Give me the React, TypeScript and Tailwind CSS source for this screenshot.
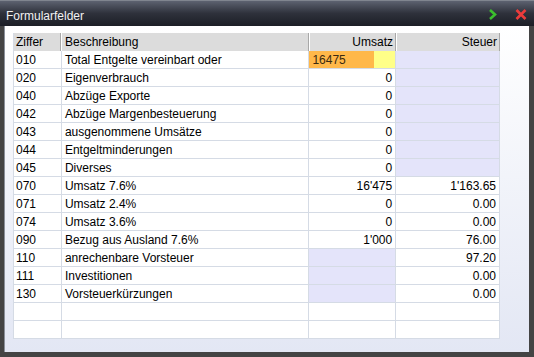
import React from 'react';

type Cell = { text?: string; kind?: 'white' | 'lavender' | 'input' };

interface Row {
  code: string;
  label: string;
  umsatz: Cell;
  steuer: Cell;
}

const rows: Row[] = [
  { code: '010', label: 'Total Entgelte vereinbart oder', umsatz: { kind: 'input', text: '16475' }, steuer: { kind: 'lavender' } },
  { code: '020', label: 'Eigenverbrauch', umsatz: { text: '0' }, steuer: { kind: 'lavender' } },
  { code: '040', label: 'Abzüge Exporte', umsatz: { text: '0' }, steuer: { kind: 'lavender' } },
  { code: '042', label: 'Abzüge Margenbesteuerung', umsatz: { text: '0' }, steuer: { kind: 'lavender' } },
  { code: '043', label: 'ausgenommene Umsätze', umsatz: { text: '0' }, steuer: { kind: 'lavender' } },
  { code: '044', label: 'Entgeltminderungen', umsatz: { text: '0' }, steuer: { kind: 'lavender' } },
  { code: '045', label: 'Diverses', umsatz: { text: '0' }, steuer: { kind: 'lavender' } },
  { code: '070', label: 'Umsatz 7.6%', umsatz: { text: "16'475" }, steuer: { text: "1'163.65" } },
  { code: '071', label: 'Umsatz 2.4%', umsatz: { text: '0' }, steuer: { text: '0.00' } },
  { code: '074', label: 'Umsatz 3.6%', umsatz: { text: '0' }, steuer: { text: '0.00' } },
  { code: '090', label: 'Bezug aus Ausland 7.6%', umsatz: { text: "1'000" }, steuer: { text: '76.00' } },
  { code: '110', label: 'anrechenbare Vorsteuer', umsatz: { kind: 'lavender' }, steuer: { text: '97.20' } },
  { code: '111', label: 'Investitionen', umsatz: { kind: 'lavender' }, steuer: { text: '0.00' } },
  { code: '130', label: 'Vorsteuerkürzungen', umsatz: { kind: 'lavender' }, steuer: { text: '0.00' } },
  { code: '', label: '', umsatz: {}, steuer: {} },
  { code: '', label: '', umsatz: {}, steuer: {} },
];

function NumberCell({ cell, width }: { cell: Cell; width: string }) {
  if (cell.kind === 'input') {
    return (
      <div className={`${width} flex h-full border-r border-[#d5dbe5]`}>
        <div className="flex w-[65px] items-center bg-[#ffb84a] pl-[3px] text-[#3a2a10]">{cell.text}</div>
        <div className="flex-1 bg-[#ffff88]" />
      </div>
    );
  }
  return (
    <div
      className={`${width} flex h-full items-center justify-end border-r border-[#d5dbe5] pr-[3px] ${
        cell.kind === 'lavender' ? 'bg-[#e4e4fa]' : 'bg-white'
      }`}
    >
      {cell.text}
    </div>
  );
}

export default function App() {
  return (
    <div
      className="flex h-[357px] w-[534px] flex-col bg-[#444444] text-[12px] text-black"
      style={{ fontFamily: '"Liberation Sans", Arial, sans-serif' }}
    >
      {/* Titelleiste */}
      <div className="flex h-[26px] shrink-0 items-center border-t border-[#80858f] bg-gradient-to-b from-[#5d6270] via-[#2e313b] to-[#1c1e26] pl-[6px] pr-[7px] pt-[2px]">
        <span className="flex-1 pt-[3px] text-[12px] text-[#f2f2f2]">Formularfelder</span>
        <svg width="8" height="11" viewBox="0 0 8 11" className="mr-[18px]">
          <path d="M1 1 L6 5.5 L1 10" fill="none" stroke="#3cbf2e" strokeWidth="2.6" strokeLinejoin="miter" />
        </svg>
        <svg width="12" height="11" viewBox="0 0 12 11">
          <path d="M1.5 1 L10.5 10 M10.5 1 L1.5 10" fill="none" stroke="#ec3b3b" strokeWidth="2.6" />
        </svg>
      </div>

      {/* Inhalt */}
      <div className="flex flex-1 pb-[5px] pl-[4px] pr-[5px]">
        <div className="flex-1 border-l border-[#8a8f99] bg-gradient-to-b from-white to-[#e3e7f4] pl-[8px] pt-[7px]">
          <div className="w-[487px] border-l border-[#d5dbe5]">
            <div className="flex h-[18px] bg-[#dcdcdc]">
              <div className="flex w-[47px] items-center border-r border-[#a8a8a8] pl-[2px]">Ziffer</div>
              <div className="flex w-[248px] items-center border-l border-r border-l-white border-r-[#a8a8a8] pl-[3px]">
                Beschreibung
              </div>
              <div className="flex w-[87px] items-center justify-end border-l border-r border-l-white border-r-[#a8a8a8] pr-[2px]">
                Umsatz
              </div>
              <div className="flex w-[104px] items-center justify-end border-l border-r border-l-white border-r-[#a8a8a8] pr-[2px]">
                Steuer
              </div>
            </div>
            {rows.map((row, i) => (
              <div key={i} className="flex h-[18px] border-b border-[#d5dbe5] bg-white">
                <div className="flex w-[48px] items-center border-r border-[#d5dbe5] pl-[2px]">{row.code}</div>
                <div className="flex w-[248px] items-center border-r border-[#d5dbe5] pl-[3px]">{row.label}</div>
                <NumberCell cell={row.umsatz} width="w-[87px]" />
                <NumberCell cell={row.steuer} width="w-[104px]" />
              </div>
            ))}
          </div>
        </div>
      </div>
    </div>
  );
}
